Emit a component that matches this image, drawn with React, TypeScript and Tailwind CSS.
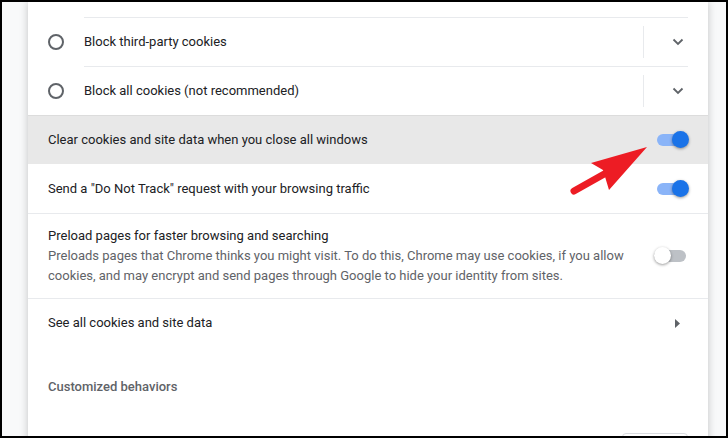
import React from "react";

function Radio() {
  return <span className="block w-4 h-4 rounded-full border-2 border-[#5f6368] shrink-0" />;
}

function Chevron() {
  return (
    <svg width="12" height="8" viewBox="0 0 12 8" aria-hidden="true">
      <path d="M1.5 1.5l4.5 4.5 4.5-4.5" fill="none" stroke="#5f6368" strokeWidth="1.8" />
    </svg>
  );
}

function Toggle({ on }: { on: boolean }) {
  return on ? (
    <div className="relative w-[31px] h-[12px] rounded-full bg-[#8ab4f8] shrink-0">
      <span className="absolute right-[-1px] top-[-3px] w-[17px] h-[17px] rounded-full bg-[#1a73e8] shadow-[0_1px_3px_rgba(0,0,0,0.4)]" />
    </div>
  ) : (
    <div className="relative w-[32px] h-[12px] rounded-full bg-[#bdc1c6] shrink-0">
      <span className="absolute left-0 top-[-3px] w-[17px] h-[17px] rounded-full bg-white shadow-[0_1px_3px_rgba(0,0,0,0.4)]" />
    </div>
  );
}

function RadioRow({ label }: { label: string }) {
  return (
    <div className="flex items-center h-[49px] pl-5">
      <Radio />
      <div className="flex items-center flex-1 h-full ml-5 mr-5 border-t border-[#e8eaed]">
        <span className="flex-1">{label}</span>
        <span className="w-px h-8 bg-[#e8eaed]" />
        <span className="w-[44px] flex justify-end pr-[4px]">
          <Chevron />
        </span>
      </div>
    </div>
  );
}

export default function App() {
  return (
    <div
      className="relative w-[728px] h-[438px] overflow-hidden border-2 border-black bg-[#f8f9fa] text-[13px] text-[#202124]"
      style={{ fontFamily: "Roboto, 'Liberation Sans', sans-serif" }}
    >
      <div className="ml-[26px] w-[680px] h-[460px] bg-white shadow-[0_0_8px_rgba(0,0,0,0.22)]">
        {/* tail of previous row */}
        <div className="h-[15px]" />

        <RadioRow label="Block third-party cookies" />
        <RadioRow label="Block all cookies (not recommended)" />

        <div className="flex items-center h-[49px] px-5 bg-[#e8e8e8] border-t border-[#dcdcdc]">
          <span className="flex-1">Clear cookies and site data when you close all windows</span>
          <Toggle on />
        </div>

        <div className="flex items-center h-[49px] px-5">
          <span className="flex-1">Send a "Do Not Track" request with your browsing traffic</span>
          <Toggle on />
        </div>

        <div className="flex items-center h-[85px] px-5 border-t border-[#e8eaed]">
          <div className="flex-1 pr-5 leading-5">
            <div>Preload pages for faster browsing and searching</div>
            <div className="text-[#5f6368]">
              Preloads pages that Chrome thinks you might visit. To do this, Chrome may use cookies, if you allow
              cookies, and may encrypt and send pages through Google to hide your identity from sites.
            </div>
          </div>
          <div className="pr-[2px]">
            <Toggle on={false} />
          </div>
        </div>

        <div className="flex items-center h-[49px] px-5 border-t border-[#e8eaed]">
          <span className="flex-1">See all cookies and site data</span>
          <svg width="5" height="9" viewBox="0 0 5 9" className="mr-[8px]" aria-hidden="true">
            <path d="M0 0l5 4.5L0 9z" fill="#5f6368" />
          </svg>
        </div>

        <div className="px-5 pt-[30px] leading-5 font-medium text-[#5f6368]">Customized behaviors</div>

        <div className="flex justify-end pr-5 pt-[36px]">
          <div className="w-[66px] h-[32px] rounded border border-[#dadce0]" />
        </div>
      </div>

      {/* red pointer arrow */}
      <svg className="absolute left-[-2px] top-[-2px] pointer-events-none" width="728" height="438" viewBox="0 0 728 438" aria-hidden="true">
        <line x1="574" y1="191" x2="606" y2="173" stroke="#ed1c24" strokeWidth="7" strokeLinecap="round" />
        <polygon points="647,147 591,163 603,170 609,190" fill="#ed1c24" />
      </svg>
    </div>
  );
}
